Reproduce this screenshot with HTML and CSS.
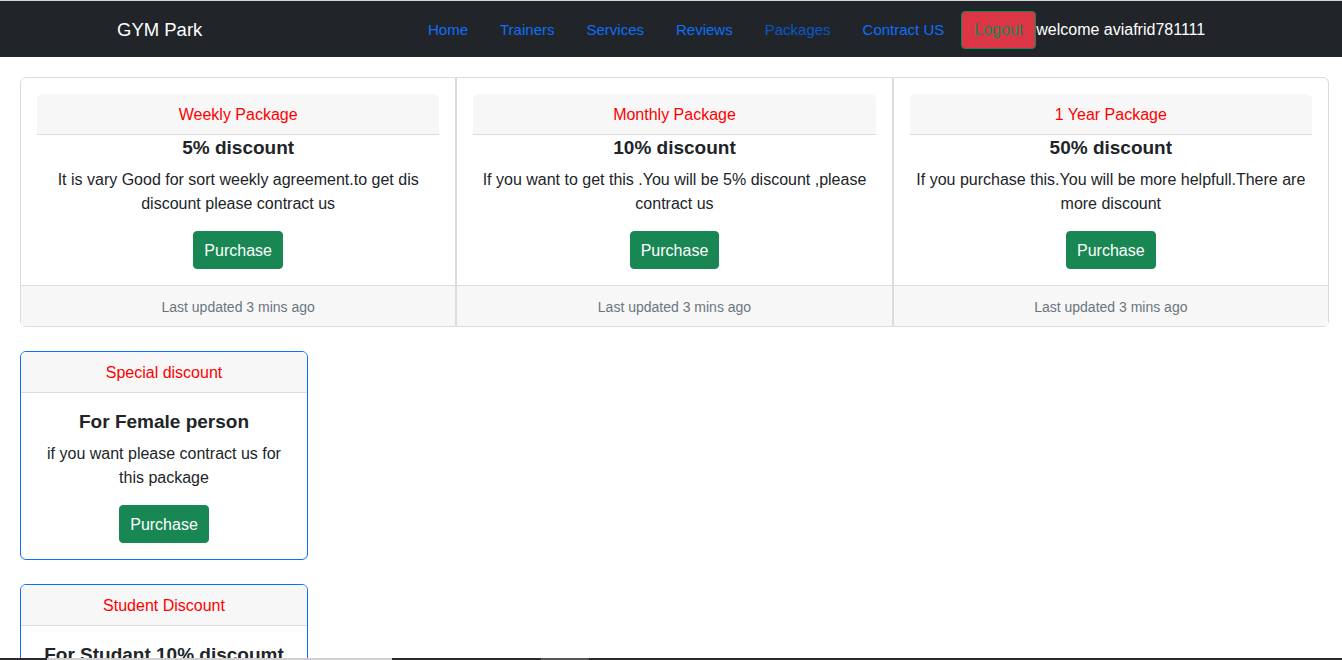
FILE: index.html
```html
<!DOCTYPE html>
<html lang="en">
<head>
<meta charset="utf-8">
<title>GYM Park - Packages</title>
<link rel="stylesheet" href="styles.css">
</head>
<body>
<nav class="navbar">
  <div class="nav-inner">
    <a class="brand" href="#">GYM Park</a>
    <ul class="nav-links">
      <li><a class="nav-link" href="#">Home</a></li>
      <li><a class="nav-link" href="#">Trainers</a></li>
      <li><a class="nav-link" href="#">Services</a></li>
      <li><a class="nav-link" href="#">Reviews</a></li>
      <li><a class="nav-link active" href="#">Packages</a></li>
      <li><a class="nav-link" href="#">Contract US</a></li>
    </ul>
    <button class="btn-logout" type="button">Logout</button>
    <span class="welcome">welcome aviafrid781111</span>
  </div>
</nav>

<main class="page">
  <div class="card-group">
    <div class="card">
      <div class="card-body">
        <div class="card-header inner">Weekly Package</div>
        <h5 class="card-title">5% discount</h5>
        <p class="card-text">It is vary Good for sort weekly agreement.to get dis discount please contract us</p>
        <a class="btn-purchase" href="#">Purchase</a>
      </div>
      <div class="card-footer"><p><small>Last updated 3 mins ago</small></p></div>
    </div>
    <div class="card">
      <div class="card-body">
        <div class="card-header inner">Monthly Package</div>
        <h5 class="card-title">10% discount</h5>
        <p class="card-text">If you want to get this .You will be 5% discount ,please contract us</p>
        <a class="btn-purchase" href="#">Purchase</a>
      </div>
      <div class="card-footer"><p><small>Last updated 3 mins ago</small></p></div>
    </div>
    <div class="card">
      <div class="card-body">
        <div class="card-header inner">1 Year Package</div>
        <h5 class="card-title">50% discount</h5>
        <p class="card-text">If you purchase this.You will be more helpfull.There are more discount</p>
        <a class="btn-purchase" href="#">Purchase</a>
      </div>
      <div class="card-footer"><p><small>Last updated 3 mins ago</small></p></div>
    </div>
  </div>

  <div class="card card-blue">
    <div class="card-header">Special discount</div>
    <div class="card-body">
      <h5 class="card-title">For Female person</h5>
      <p class="card-text">if you want please contract us for this package</p>
      <a class="btn-purchase" href="#">Purchase</a>
    </div>
  </div>

  <div class="card card-blue">
    <div class="card-header">Student Discount</div>
    <div class="card-body">
      <h5 class="card-title">For Studant 10% discoumt</h5>
      <p class="card-text">if you are a student please contract us for this package</p>
      <a class="btn-purchase" href="#">Purchase</a>
    </div>
  </div>
</main>

<div class="bottom-strip"></div>
</body>
</html>
```

FILE: styles.css
```css
* {
  box-sizing: border-box;
}

html, body {
  margin: 0;
  padding: 0;
}

body {
  font-family: "Liberation Sans", Arial, sans-serif;
  font-size: 16px;
  line-height: 1.5;
  color: #212529;
  background: #fff;
}

/* ---------- Navbar ---------- */
.navbar {
  background: #212529;
  border-top: 1px solid #d6d6d6;
  height: 57px;
}

.nav-inner {
  display: flex;
  align-items: center;
  height: 56px;
  padding-top: 2px;
  padding-left: 117px;
}

.brand {
  display: block;
  width: 295px;
  color: #fff;
  font-size: 18.5px;
  line-height: 30px;
  text-decoration: none;
}

.nav-links {
  display: flex;
  list-style: none;
  margin: 0;
  padding: 0;
}

.nav-link {
  display: block;
  padding: 8px 16px;
  color: #0d6efd;
  font-size: 15px;
  text-decoration: none;
  line-height: 24px;
}

.nav-link.active {
  color: #0a58ca;
}

.btn-logout {
  margin-left: 1px;
  height: 38px;
  margin-top: -1px;
  padding: 6px 12px;
  font-family: inherit;
  font-size: 16px;
  line-height: 24px;
  color: #198754;
  background: #dc3545;
  border: 1px solid #198754;
  border-radius: 4px;
}

.welcome {
  color: #fff;
  line-height: 24px;
}

/* ---------- Page ---------- */
.page {
  padding: 20px 13px 0 20px;
}

.card-group {
  display: flex;
}

.card {
  display: flex;
  flex-direction: column;
  background: #fff;
  border: 1px solid #dcdcdc;
  border-radius: 6px;
}

.card-group .card {
  flex: 1 1 0;
  border-radius: 0;
}

.card-group .card:first-child {
  border-radius: 6px 0 0 6px;
}

.card-group .card:last-child {
  border-radius: 0 6px 6px 0;
}

.card-body {
  flex: 1 1 auto;
  padding: 16px;
  text-align: center;
}

.card-header {
  padding: 9px 16px 7px;
  background: #f7f7f7;
  border-bottom: 1px solid #dcdcdc;
  color: #ff0000;
  text-align: center;
  line-height: 24px;
  border-radius: 5px 5px 0 0;
}

.card-title {
  margin: 0 0 8px;
  padding-top: 1px;
  height: 24px;
  font-size: 19px;
  font-weight: 700;
  line-height: 24px;
}

.card-text {
  margin: 0 0 15px;
  padding-top: 1px;
}

.btn-purchase {
  display: inline-block;
  padding: 7px 10px 5px;
  line-height: 24px;
  color: #fff;
  background: #198754;
  border: 1px solid #198754;
  border-radius: 4px;
  text-decoration: none;
}

.card-footer {
  padding: 9px 16px 7px;
  background: #f7f7f7;
  border-top: 1px solid #dcdcdc;
  text-align: center;
  color: #6c757d;
}

.card-footer p {
  margin: 0;
}

.card-footer small {
  font-size: 14px;
}

.card-blue {
  width: 288px;
  margin-top: 24px;
  border-color: #0d6efd;
}

/* ---------- bottom strip overlay ---------- */
.bottom-strip {
  position: fixed;
  left: 0;
  right: 0;
  bottom: 0;
  height: 2px;
  background: linear-gradient(to right,
    #2b2b2b 0, #2b2b2b 47px,
    #cfcfcf 47px, #cfcfcf 392px,
    #2b2b2b 392px, #2b2b2b 541px,
    #555 541px, #555 589px,
    #2b2b2b 589px);
}
```
